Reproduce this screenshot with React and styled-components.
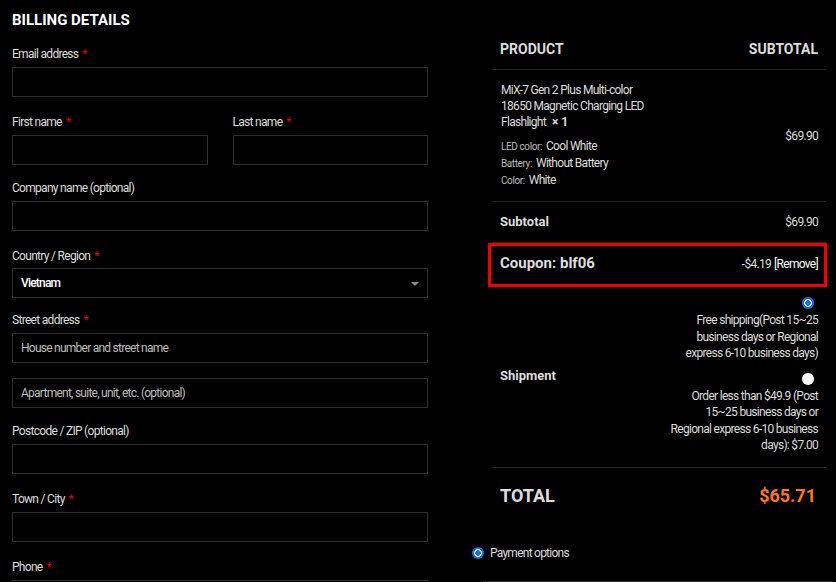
import React from 'react'
import styled, { createGlobalStyle } from 'styled-components'

const Global = createGlobalStyle`
    html, body {
        margin: 0;
        padding: 0;
        background: #000;
    }
    body {
        font-family: Roboto, 'Liberation Sans', sans-serif;
        color: #ddd;
        overflow: hidden;
    }
    * { box-sizing: border-box; }
`;

const Page = styled.div`
    display: flex;
    width: 836px;
    height: 582px;
    padding-left: 12px;
    gap: 42px;
    overflow: hidden;
`;

const Billing = styled.div`
    width: 416px;
    flex-shrink: 0;
    padding-top: 10px;
`;

const Heading = styled.h3`
    margin: 0;
    font-size: 15px;
    line-height: 20px;
    font-weight: 700;
    color: #fff;
    text-transform: uppercase;
`;

const Row = styled.div`
    display: flex;
    gap: 25px;
`;

const Field = styled.div`
    margin-top: ${p => p.mt ?? 16}px;
    flex: ${p => p.half ? '1 1 0' : 'none'};
`;

const Label = styled.label`
    display: block;
    font-size: 12px;
    line-height: 18px;
    letter-spacing: -0.7px;
    color: #ddd;
    margin-bottom: ${p => p.mb ?? 4}px;
`;

const Req = styled.span`
    color: #e2001a;
    margin-left: 4px;
`;

const Input = styled.input`
    display: block;
    width: 100%;
    height: 30px;
    background: #000;
    border: 1px solid #2c2c2c;
    border-radius: 0;
    padding: 0 8px;
    font-family: inherit;
    font-size: 12px;
    letter-spacing: -0.75px;
    color: #ddd;
    outline: none;
    &::placeholder { color: #bdbdbd; }
`;

const Select = styled.div`
    position: relative;
    height: 30px;
    border: 1px solid #2c2c2c;
    padding: 0 8px;
    display: flex;
    align-items: center;
    font-size: 12px;
    font-weight: 500;
    letter-spacing: -0.8px;
    color: #fff;
    &::after {
        content: '';
        position: absolute;
        right: 8px;
        top: 13px;
        border-left: 4px solid transparent;
        border-right: 4px solid transparent;
        border-top: 4px solid #888;
    }
`;

const Order = styled.div`
    width: 366px;
    flex-shrink: 0;
    padding-top: 31px;
`;

const Table = styled.div`
    margin: 0 10px 0 22px;
`;

const TRow = styled.div`
    display: flex;
    justify-content: space-between;
    align-items: center;
    padding: ${p => p.pad || '10px 8px'};
    border-bottom: ${p => p.last ? 'none' : '1px solid #262626'};
`;

const Th = styled.div`
    font-size: 14px;
    line-height: 20px;
    font-weight: 700;
    text-transform: uppercase;
    color: #ddd;
`;

const ProductName = styled.div`
    font-size: 12px;
    line-height: 16px;
    letter-spacing: -0.7px;
    color: #ddd;
    width: 150px;
`;

const Qty = styled.strong`
    font-weight: 700;
    letter-spacing: 0;
    margin-left: 6px;
`;

const Meta = styled.dl`
    margin: 8px 0 0;
    font-size: 12px;
    line-height: 17px;
    letter-spacing: -0.7px;
`;

const MetaLine = styled.div`
    display: flex;
    gap: 4px;
    align-items: baseline;
`;

const MetaKey = styled.dt`
    font-size: 10px;
    letter-spacing: -0.4px;
    color: #bbb;
`;

const MetaVal = styled.dd`
    margin: 0;
    color: #ddd;
`;

const Price = styled.div`
    font-size: 12px;
    line-height: 18px;
    letter-spacing: -0.7px;
    color: #ddd;
    white-space: nowrap;
`;

const RowTitle = styled.div`
    font-size: ${p => p.size || 13}px;
    line-height: 19px;
    font-weight: 700;
    color: #ddd;
`;

const CouponRow = styled(TRow)`
    border: 3px solid #f40000;
    margin: 0 -1px 0 -4px;
    padding: 8px 6px 11px 9px;
`;

const RemoveLink = styled.a`
    color: #fff;
    text-decoration: none;
    margin-left: 3px;
`;

const Options = styled.ul`
    list-style: none;
    margin: 0;
    padding: 0;
    display: flex;
    flex-direction: column;
    gap: 11px;
    width: 150px;
`;

const Option = styled.li`
    display: flex;
    flex-direction: column;
    align-items: flex-end;
    text-align: right;
    font-size: 12px;
    line-height: 16.5px;
    letter-spacing: -0.7px;
    color: #ddd;
`;

const Radio = styled.span`
    display: block;
    width: 12px;
    height: 12px;
    border-radius: 50%;
    margin: ${p => p.inline ? '0' : '0 4px 3px 0'};
    flex-shrink: 0;
    background: ${p => p.checked
        ? 'radial-gradient(circle, #1a6ff0 0 2.6px, #fff 3px 3.6px, #1a6ff0 4.1px)'
        : '#fff'};
`;

const Total = styled.div`
    font-size: 18px;
    line-height: 24px;
    font-weight: 700;
    text-transform: uppercase;
    color: ${p => p.accent ? '#ff7b00' : '#ddd'};
`;

const Payment = styled.div`
    margin-top: 20px;
    padding-left: 2px;
`;

const PaymentHead = styled.div`
    display: flex;
    align-items: center;
    gap: 6px;
    font-size: 12px;
    line-height: 18px;
    letter-spacing: -0.75px;
    color: #ddd;
`;

const PaymentBox = styled.div`
    margin: 19px 3px 0 11px;
    border-top: 1px solid #262626;
    height: 20px;
`;

export default function App() {
    return (
        <Page>
            <Global />
            <Billing>
                <Heading>Billing details</Heading>
                <Field mt={15}>
                    <Label>Email address<Req>*</Req></Label>
                    <Input />
                </Field>
                <Row>
                    <Field half>
                        <Label>First name<Req>*</Req></Label>
                        <Input />
                    </Field>
                    <Field half>
                        <Label>Last name<Req>*</Req></Label>
                        <Input />
                    </Field>
                </Row>
                <Field mt={14}>
                    <Label>Company name (optional)</Label>
                    <Input />
                </Field>
                <Field>
                    <Label mb={3}>Country / Region<Req>*</Req></Label>
                    <Select>Vietnam</Select>
                </Field>
                <Field mt={13}>
                    <Label>Street address<Req>*</Req></Label>
                    <Input placeholder="House number and street name" />
                </Field>
                <Field mt={15}>
                    <Input placeholder="Apartment, suite, unit, etc. (optional)" />
                </Field>
                <Field mt={14}>
                    <Label>Postcode / ZIP (optional)</Label>
                    <Input />
                </Field>
                <Field>
                    <Label>Town / City<Req>*</Req></Label>
                    <Input />
                </Field>
                <Field>
                    <Label>Phone<Req>*</Req></Label>
                    <Input />
                </Field>
            </Billing>

            <Order>
                <Table>
                    <TRow pad="8px 8px 10px">
                        <Th>Product</Th>
                        <Th>Subtotal</Th>
                    </TRow>
                    <TRow pad="12px 8px 12px 9px">
                        <div>
                            <ProductName>
                                MiX-7 Gen 2 Plus Multi-color 18650 Magnetic Charging LED Flashlight
                                <Qty>×&nbsp;1</Qty>
                            </ProductName>
                            <Meta>
                                <MetaLine><MetaKey>LED color:</MetaKey><MetaVal>Cool White</MetaVal></MetaLine>
                                <MetaLine><MetaKey>Battery:</MetaKey><MetaVal>Without Battery</MetaVal></MetaLine>
                                <MetaLine><MetaKey>Color:</MetaKey><MetaVal>White</MetaVal></MetaLine>
                            </Meta>
                        </div>
                        <Price>$69.90</Price>
                    </TRow>
                    <TRow pad="10px 8px 11px">
                        <RowTitle>Subtotal</RowTitle>
                        <Price>$69.90</Price>
                    </TRow>
                    <CouponRow>
                        <RowTitle size={15}>Coupon: blf06</RowTitle>
                        <Price>-$4.19<RemoveLink href="#">[Remove]</RemoveLink></Price>
                    </CouponRow>
                    <TRow pad="10px 8px 13px">
                        <RowTitle>Shipment</RowTitle>
                        <Options>
                            <Option>
                                <Radio checked />
                                Free shipping(Post 15~25 business days or Regional express 6-10 business days)
                            </Option>
                            <Option>
                                <Radio />
                                Order less than $49.9 (Post 15~25 business days or Regional express 6-10 business days): $7.00
                            </Option>
                        </Options>
                    </TRow>
                    <TRow pad="16px 10px 16px 8px" last>
                        <Total>Total</Total>
                        <Total accent>$65.71</Total>
                    </TRow>
                </Table>
                <Payment>
                    <PaymentHead>
                        <Radio checked inline />
                        Payment options
                    </PaymentHead>
                    <PaymentBox />
                </Payment>
            </Order>
        </Page>
    )
}
